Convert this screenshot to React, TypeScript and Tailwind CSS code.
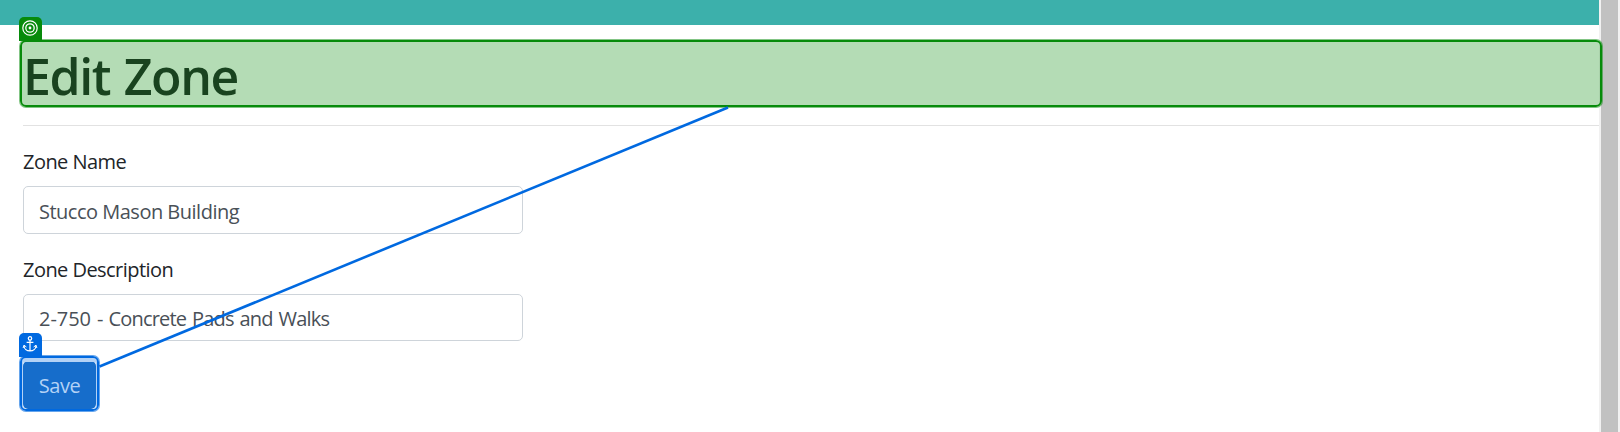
import type { ReactNode } from "react";

function TargetBadge() {
  return (
    <span className="absolute -left-[3px] -top-[25px] flex h-[24px] w-[23px] justify-center rounded-t-[5px] bg-[#078b0b] pr-px pt-[3px]">
      <svg width="16" height="16" viewBox="0 0 16 16" fill="none" stroke="white">
        <circle cx="8" cy="8" r="7.2" strokeWidth="1.2" />
        <circle cx="8" cy="8" r="4.2" strokeWidth="1.3" />
        <circle cx="8" cy="8" r="1.4" fill="white" stroke="none" />
      </svg>
    </span>
  );
}

function AnchorBadge() {
  return (
    <span className="absolute -left-[3px] -top-[25px] flex h-[24px] w-[23px] justify-center rounded-t-[5px] bg-[#0069e0] pr-px pt-[3px]">
      <svg width="16" height="16" viewBox="0 0 16 16" fill="none" stroke="white" strokeWidth="1.2">
        <circle cx="8" cy="2.4" r="1.7" />
        <path d="M8 4.1V15M4.6 6.4H11.4M2 9.6C2 13 4.8 14.9 8 14.9S14 13 14 9.6" />
        <path d="M1.1 12L2 9.2L4.4 11M14.9 12L14 9.2L11.6 11" strokeWidth="1" />
      </svg>
    </span>
  );
}

function Field({ label, children }: { label: string; children: ReactNode }) {
  return (
    <div className="flex flex-col gap-[9px]">
      <label className="tracking-[-0.55px]">{label}</label>
      {children}
    </div>
  );
}

export default function App() {
  return (
    <div className="relative isolate flex h-[432px] w-[1620px] overflow-hidden bg-white font-['Open_Sans','Noto_Sans',sans-serif] text-[20px] leading-[30px] text-[#212529]">
      <main className="z-10 flex w-[1599px] shrink-0 flex-col">
        <header className="h-[25px] bg-[#3cb0ab]" />
        <div className="flex flex-col gap-[21px] pl-[23px] pt-[18px]">
          <div className="relative h-[61px]">
            <h1 className="whitespace-nowrap text-[50px] font-semibold leading-[66px] tracking-[-1.4px] [word-spacing:2px]">Edit Zone</h1>
            <div className="absolute -left-[3px] -right-[3px] -top-[3px] h-[67px] rounded-[6px] border-[2px] border-[#078b0b] bg-[#078b0b]/30 ring-1 ring-[#078b0b]/50">
              <TargetBadge />
            </div>
          </div>
          <hr className="border-[#e2e2e2]" />
          <form className="flex w-[500px] flex-col gap-[21px]">
            <Field label="Zone Name">
              <div className="flex h-12 items-center rounded-[5px] border border-[#ced4da] px-[15px] pt-[3px] tracking-[-0.5px] text-[#495057]">Stucco Mason Building</div>
            </Field>
            <Field label="Zone Description">
              <div className="flex h-[47px] items-center gap-[5px] rounded-[5px] border border-[#ced4da] px-[15px] pt-[3px] text-[#495057]">
                <span className="tracking-[-0.05px] [word-spacing:1px]">2-750 -</span>
                <span className="tracking-[-0.82px] [word-spacing:1.5px]">Concrete Pads and Walks</span>
              </div>
            </Field>
            <div className="relative -mt-px w-[73px]">
              <button type="button" className="block h-12 w-full rounded-[5px] bg-[#166dcb] pt-px tracking-[-0.5px] text-[#b3d2f6]">Save</button>
              <div className="absolute -inset-x-[3px] -top-[5px] h-[55px] rounded-[6px] border-[2px] border-[#0069e0] shadow-[inset_0_4px_0_#b3d2f6,inset_1px_0_0_#b3d2f6,inset_-1px_0_0_#b3d2f6] ring-1 ring-[#0069e0]/60">
                <AnchorBadge />
              </div>
            </div>
          </form>
        </div>
      </main>
      <aside className="w-[21px] shrink-0 border-x-2 border-[#f1f1f1] bg-[#c1c1c1]" />
      <svg className="pointer-events-none absolute inset-0 z-20" width="1620" height="432">
        <path d="M99.500 366.500L728 107.500" stroke="#0069e0" strokeWidth="2.6" />
      </svg>
    </div>
  );
}
